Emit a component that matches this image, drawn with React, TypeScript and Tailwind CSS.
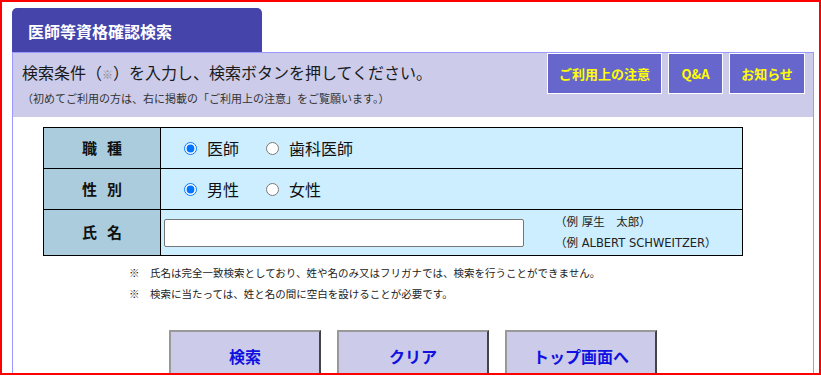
const FONT = '"Noto Sans CJK JP", "Noto Sans", sans-serif';
const LATIN_WIDE = '"DejaVu Sans", "Noto Sans CJK JP", sans-serif';

function RadioItem({ label, checked }: { label: string; checked?: boolean }) {
  return (
    <label className="flex items-center">
      <input
        type="radio"
        defaultChecked={checked}
        className="m-0 h-[13px] w-[13px]"
        name={label}
      />
      <span className="ml-[10px] text-[16px] text-[#111]">{label}</span>
    </label>
  );
}

function Label({ a, b }: { a: string; b: string }) {
  return (
    <div className="flex items-center justify-center gap-[10px] border-r border-b border-black bg-[#aaccdd] text-[15px] font-bold text-[#111]">
      <span>{a}</span>
      <span>{b}</span>
    </div>
  );
}

function NavButton({ children }: { children: React.ReactNode }) {
  return (
    <button className="flex h-[48px] w-[152px] items-center justify-center border-2 border-t-[#999] border-l-[#999] border-r-[#444] border-b-[#444] bg-[#ccccea] pt-[4px] text-[16px] font-bold text-[#1010e0]">
      {children}
    </button>
  );
}

function InfoButton({ children, w }: { children: React.ReactNode; w: string }) {
  return (
    <button
      className={`flex h-[41px] items-center justify-center border border-white bg-[#6666cc] text-[13px] font-bold text-[#ffff00] ${w}`}
    >
      {children}
    </button>
  );
}

export default function App() {
  return (
    <div className="h-[376px] w-[821px] overflow-hidden bg-white" style={{ fontFamily: FONT }}>
      <div className="flex h-[375px] flex-col overflow-hidden border-2 border-[#ff0000] pt-[6px] pr-[5px] pl-[10px]">
        <div className="flex h-[44px] w-[250px] shrink-0 items-center rounded-t-[5px] bg-[#4444aa] pt-[2px] pl-[16px] text-[16px] font-bold text-white">
          医師等資格確認検索
        </div>
        <div className="flex flex-1 shrink-0 flex-col border border-b-0 border-[#9999ff]">
          <div className="flex h-[64px] shrink-0 bg-[#ccccea]">
            <div className="flex-1 pt-[7px] pl-[9px]">
              <div className="text-[16px] leading-[24px] text-[#1a1a1a]">
                検索条件（<span className="text-[11px] text-[#888]">※</span>）を入力し、検索ボタンを押してください。
              </div>
              <div className="mt-[4px] text-[11px] leading-[16px] text-[#333]">
                （初めてご利用の方は、右に掲載の「ご利用上の注意」をご覧願います。）
              </div>
            </div>
            <div className="flex gap-[6px] pr-[8px]">
              <InfoButton w="w-[115px]">ご利用上の注意</InfoButton>
              <InfoButton w="w-[55px]">Q&amp;A</InfoButton>
              <InfoButton w="w-[76px]">お知らせ</InfoButton>
            </div>
          </div>

          <div className="mt-[10px] ml-[30px] grid w-[700px] shrink-0 grid-cols-[117px_1fr] grid-rows-[41px_41px_46px] border-t border-l border-black">
            <Label a="職" b="種" />
            <div className="flex items-center gap-[27px] border-r border-b border-black bg-[#cceeff] pl-[23px]">
              <RadioItem label="医師" checked />
              <RadioItem label="歯科医師" />
            </div>
            <Label a="性" b="別" />
            <div className="flex items-center gap-[27px] border-r border-b border-black bg-[#cceeff] pl-[23px]">
              <RadioItem label="男性" checked />
              <RadioItem label="女性" />
            </div>
            <Label a="氏" b="名" />
            <div className="flex items-center border-r border-b border-black bg-[#cceeff] pl-[3px]">
              <input
                type="text"
                className="h-[28px] w-[360px] rounded-[2px] border border-[#767676] bg-white"
              />
              <div
                className="ml-[31px] text-[11.5px] leading-[21px] text-[#222]"
                style={{ fontFamily: LATIN_WIDE }}
              >
                <div>（例 厚生　太郎）</div>
                <div>（例 ALBERT SCHWEITZER）</div>
              </div>
            </div>
          </div>

          <div className="mt-[6px] ml-[116px] shrink-0 text-[10.5px] leading-[21px] text-[#222]">
            <div className="flex">
              <span className="w-[21px]">※</span>
              <span>氏名は完全一致検索としており、姓や名のみ又はフリガナでは、検索を行うことができません。</span>
            </div>
            <div className="flex">
              <span className="w-[21px]">※</span>
              <span>検索に当たっては、姓と名の間に空白を設けることが必要です。</span>
            </div>
          </div>

          <div className="mt-[26px] ml-[156px] flex shrink-0 gap-[16px]">
            <NavButton>検索</NavButton>
            <NavButton>クリア</NavButton>
            <NavButton>トップ画面へ</NavButton>
          </div>
        </div>
      </div>
    </div>
  );
}
